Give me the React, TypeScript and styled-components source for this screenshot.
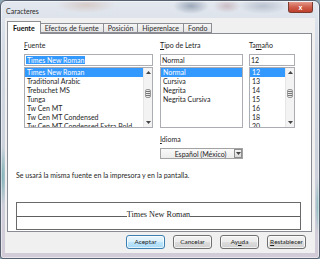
import React from 'react';
import styled, { createGlobalStyle } from 'styled-components';

const GlobalStyle = createGlobalStyle`
  html, body {
    margin: 0;
    padding: 0;
    background: #8ea6b2;
  }
  body {
    width: 320px;
    height: 259px;
    overflow: hidden;
    font-family: Lato, "Liberation Sans", sans-serif;
    font-size: 7px;
    color: #1e1e1e;
  }
  * { box-sizing: border-box; }
`;

const fonts = ['Times New Roman', 'Traditional Arabic', 'Trebuchet MS', 'Tunga', 'Tw Cen MT', 'Tw Cen MT Condensed', 'Tw Cen MT Condensed Extra Bold'];
const styles = ['Normal', 'Cursiva', 'Negrita', 'Negrita Cursiva'];
const sizes = ['12', '13', '14', '15', '16', '18', '20'];
const tabs = ['Fuente', 'Efectos de fuente', 'Posición', 'Hiperenlace', 'Fondo'];

const Arrow = ({ up }: { up?: boolean }) => (
  <svg width="5" height="3" viewBox="0 0 5 3">
    <path d={up ? 'M0 3 L2.5 0 L5 3 Z' : 'M0 0 L2.5 3 L5 0 Z'} fill="#444" />
  </svg>
);

const ScrollBar = () => (
  <Scroll>
    <ScrollArrow><Arrow up /></ScrollArrow>
    <Track>
      <Thumb>
        <Grip />
        <Grip />
        <Grip />
      </Thumb>
    </Track>
    <ScrollArrow><Arrow /></ScrollArrow>
  </Scroll>
);

interface FieldProps {
  label: React.ReactNode;
  value: string;
  items: string[];
  width: number;
  scroll?: boolean;
  markValue?: boolean;
  children?: React.ReactNode;
}

const Field: React.FC<FieldProps> = ({ label, value, items, width, scroll, markValue, children }) => (
  <Column $w={width}>
    <FieldLabel>{label}</FieldLabel>
    <TextBox>{markValue ? <Marked>{value}</Marked> : value}</TextBox>
    <ListBox>
      <Items>
        {items.map((it) => (
          <Item key={it} $sel={it === value}>{it}</Item>
        ))}
      </Items>
      {scroll && <ScrollBar />}
    </ListBox>
    {children}
  </Column>
);

const App: React.FC = () => {
  return (
    <>
      <GlobalStyle />
      <Window>
        <TitleBar>
          <Title>Caracteres</Title>
          <CloseButton>x</CloseButton>
        </TitleBar>
        <Client>
          <TabRow>
            {tabs.map((t, i) => (
              <Tab key={t} $active={i === 0}>{t}</Tab>
            ))}
          </TabRow>
          <Panel>
            <Columns>
              <Field label={<><u>F</u>uente</>} value="Times New Roman" items={fonts} width={129} scroll markValue />
              <Field label={<><u>T</u>ipo de Letra</>} value="Normal" items={styles} width={83}>
                <FieldLabel $gap>
                  <u>I</u>dioma
                </FieldLabel>
                <Dropdown>
                  <DropText>Español (México)</DropText>
                  <DropButton><Arrow /></DropButton>
                </Dropdown>
              </Field>
              <Field label={<>Ta<u>m</u>año</>} value="12" items={sizes} width={46} scroll />
            </Columns>
            <Message>Se usará la misma fuente en la impresora y en la pantalla.</Message>
            <Preview>
              <PreviewLine>
                <Rule />
                <Sample>Times New Roman</Sample>
                <Rule />
              </PreviewLine>
            </Preview>
          </Panel>
          <ButtonRow>
            <Button $default>Aceptar</Button>
            <Button>Cancelar</Button>
            <Button>Ay<u>u</u>da</Button>
            <Button><u>R</u>establecer</Button>
          </ButtonRow>
        </Client>
      </Window>
    </>
  );
};

export default App;

const Window = styled.div`
  width: 320px;
  height: 259px;
  display: flex;
  flex-direction: column;
  padding: 0 4px 5px 4px;
  border: 1px solid #56606e;
  border-radius: 6px 6px 3px 3px;
  background:
    radial-gradient(ellipse 30px 8px at 85px 4px, rgba(190, 150, 130, 0.35), transparent),
    radial-gradient(ellipse 18px 8px at 190px 5px, rgba(70, 90, 120, 0.45), transparent),
    radial-gradient(ellipse 14px 7px at 226px 5px, rgba(160, 110, 120, 0.35), transparent),
    radial-gradient(ellipse 25px 8px at 262px 5px, rgba(110, 125, 150, 0.35), transparent),
    radial-gradient(ellipse 5px 30px at 1px 175px, rgba(60, 150, 150, 0.55), transparent),
    radial-gradient(ellipse 4px 30px at 318px 205px, rgba(60, 160, 160, 0.6), transparent),
    linear-gradient(to bottom, #e3e8ef 0%, #d3dae4 20%, #cbd2dc 60%, #d2cbd8 100%);
  box-shadow: inset 0 0 0 1px rgba(255, 255, 255, 0.5);
`;

const TitleBar = styled.div`
  height: 17px;
  display: flex;
  justify-content: space-between;
  align-items: flex-start;
`;

const Title = styled.div`
  padding: 6px 0 0 1px;
  line-height: 8px;
  color: #2a2a2a;
`;

const CloseButton = styled.div`
  width: 25px;
  height: 11px;
  margin: 1px 2px 0 0;
  display: flex;
  align-items: center;
  justify-content: center;
  border: 1px solid #7a3a30;
  border-top: none;
  border-radius: 0 0 3px 3px;
  background: linear-gradient(to bottom, #e49a8c 0%, #cf5f4c 50%, #c0402c 100%);
  color: #fff;
  font-family: "Liberation Sans", sans-serif;
  font-weight: bold;
  font-size: 7px;
  line-height: 7px;
`;

const Client = styled.div`
  flex: 1;
  display: flex;
  flex-direction: column;
  background: #f0f0f0;
  padding: 3px 3px 0 2px;
`;

const TabRow = styled.div`
  height: 12px;
  display: flex;
  align-items: flex-end;
  padding-left: 1px;
`;

const Tab = styled.div<{ $active?: boolean }>`
  position: relative;
  z-index: ${(p) => (p.$active ? 1 : 0)};
  height: ${(p) => (p.$active ? 13 : 10)}px;
  margin-bottom: ${(p) => (p.$active ? -1 : 0)}px;
  margin-left: -1px;
  padding: 0 ${(p) => (p.$active ? 5 : 4)}px;
  display: flex;
  align-items: center;
  border: 1px solid #8c8e94;
  border-bottom: ${(p) => (p.$active ? 'none' : '1px solid #8c8e94')};
  background: ${(p) => (p.$active ? '#fff' : 'linear-gradient(to bottom, #f6f6f6, #e4e4e4)')};
  font-weight: ${(p) => (p.$active ? 700 : 400)};
  color: ${(p) => (p.$active ? '#111' : '#2d2d2d')};
  line-height: 8px;
  white-space: nowrap;
`;

const Panel = styled.div`
  height: 199px;
  display: flex;
  flex-direction: column;
  background: #fff;
  border: 1px solid #898c95;
  padding: 7px 10px 0 8px;
`;

const Columns = styled.div`
  display: flex;
  gap: 7px;
  margin-left: 8px;
  & > :last-child {
    margin-left: -1px;
  }
`;

const Column = styled.div<{ $w: number }>`
  width: ${(p) => p.$w}px;
  display: flex;
  flex-direction: column;
`;

const FieldLabel = styled.div<{ $gap?: boolean }>`
  height: 8px;
  line-height: 8px;
  margin: ${(p) => (p.$gap ? '7px 0 5px' : '0 0 5px')};
  white-space: nowrap;
`;

const TextBox = styled.div`
  height: 12px;
  display: flex;
  align-items: center;
  border: 1px solid #abadb3;
  padding: 0 1px;
  white-space: nowrap;
`;

const Marked = styled.span`
  background: #3399ff;
  color: #fff;
  line-height: 8px;
  padding: 0 1px;
`;

const ListBox = styled.div`
  height: 61px;
  margin-top: 1px;
  display: flex;
  border: 1px solid #abadb3;
  overflow: hidden;
`;

const Items = styled.div`
  flex: 1;
  min-width: 0;
  display: flex;
  flex-direction: column;
`;

const Item = styled.div<{ $sel?: boolean }>`
  height: 9px;
  flex: none;
  line-height: 9px;
  padding: 0 2px;
  white-space: nowrap;
  background: ${(p) => (p.$sel ? '#3399ff' : 'transparent')};
  color: ${(p) => (p.$sel ? '#fff' : '#1e1e1e')};
`;

const Scroll = styled.div`
  width: 9px;
  display: flex;
  flex-direction: column;
  background: #f3f3f3;
  border-left: 1px solid #e6e6e6;
`;

const ScrollArrow = styled.div`
  height: 9px;
  display: flex;
  align-items: center;
  justify-content: center;
`;

const Track = styled.div`
  flex: 1;
  padding-top: 12px;
`;

const Thumb = styled.div`
  height: 9px;
  margin: 0 1px;
  display: flex;
  flex-direction: column;
  justify-content: center;
  align-items: center;
  gap: 1px;
  border: 1px solid #9a9a9a;
  border-radius: 2px;
  background: linear-gradient(to right, #f4f4f4, #dcdcdc);
`;

const Grip = styled.div`
  width: 4px;
  height: 1px;
  background: #777;
`;

const Dropdown = styled.div`
  height: 11px;
  display: flex;
  align-items: center;
  border: 1px solid #a3a3a3;
  background: linear-gradient(to bottom, #fafafa, #ececec);
`;

const DropText = styled.div`
  flex: 1;
  text-align: center;
  padding-left: 6px;
  line-height: 8px;
  white-space: nowrap;
`;

const DropButton = styled.div`
  width: 8px;
  height: 9px;
  display: flex;
  align-items: center;
  justify-content: center;
  border: 1px solid #8e8e8e;
  background: linear-gradient(to bottom, #f4f4f4, #d9d9d9);
`;

const Message = styled.div`
  margin-top: 12px;
  line-height: 8px;
  white-space: nowrap;
`;

const Preview = styled.div`
  height: 28px;
  margin-top: 23px;
  display: flex;
  align-items: center;
  padding-bottom: 2px;
  border: 1px solid #6a6a6a;
`;

const PreviewLine = styled.div`
  width: 100%;
  display: flex;
  align-items: baseline;
`;

const Rule = styled.div`
  flex: 1;
  height: 0;
  border-bottom: 1px solid #5e5e5e;
`;

const Sample = styled.span`
  font-family: "Liberation Serif", serif;
  font-size: 8.2px;
  line-height: 10px;
  color: #222;
`;

const ButtonRow = styled.div`
  flex: 1;
  display: flex;
  justify-content: flex-end;
  align-items: flex-start;
  gap: 8px;
  padding: 3px 6px 0 0;
`;

const Button = styled.div<{ $default?: boolean }>`
  width: 39px;
  height: 14px;
  display: flex;
  align-items: center;
  justify-content: center;
  border: 1px solid ${(p) => (p.$default ? '#3c7fb1' : '#707070')};
  border-radius: 3px;
  background: ${(p) =>
    p.$default ? 'linear-gradient(to bottom, #eaf6fd 0%, #d9f0fc 50%, #bee6fd 51%, #a7d9f5 100%)' : 'linear-gradient(to bottom, #f2f2f2 0%, #ebebeb 50%, #dddddd 51%, #cfcfcf 100%)'};
  box-shadow: inset 0 0 0 1px rgba(255, 255, 255, 0.7);
  font-size: 6.4px;
  line-height: 8px;
  color: #1e1e1e;
  white-space: nowrap;
`;
